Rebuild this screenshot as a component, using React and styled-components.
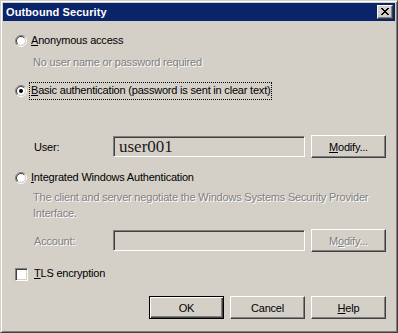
import React from "react";
import styled, { createGlobalStyle } from "styled-components";

const GlobalStyle = createGlobalStyle`
  html, body {
    margin: 0;
    padding: 0;
    background: #d4d0c8;
  }
  body {
    font-family: "Liberation Sans", Arial, sans-serif;
    font-size: 11px;
    letter-spacing: -0.2px;
    color: #000;
  }
`;

const RadioIcon = ({ checked }) => (
  <svg width="12" height="12" viewBox="0 0 12 12">
    <circle cx="6" cy="6" r="4" fill="#fff" />
    <path d="M2.1 9.9 A5.5 5.5 0 0 1 9.9 2.1" stroke="#808080" fill="none" />
    <path d="M9.9 2.1 A5.5 5.5 0 0 1 2.1 9.9" stroke="#fff" fill="none" />
    <path d="M2.8 9.2 A4.5 4.5 0 0 1 9.2 2.8" stroke="#404040" fill="none" />
    <path d="M9.2 2.8 A4.5 4.5 0 0 1 2.8 9.2" stroke="#d4d0c8" fill="none" />
    {checked && <circle cx="6" cy="6" r="2" fill="#000" />}
  </svg>
);

const Mn = ({ children }) => <u>{children}</u>;

export default function App() {
  return (
    <>
      <GlobalStyle />
      <Window>
        <TitleBar>
          <Title>Outbound Security</Title>
          <CloseButton>
            <svg width="8" height="7" viewBox="0 0 8 7">
              <path d="M0 0 L7 7 M1 0 L8 7 M7 0 L0 7 M8 0 L1 7" stroke="#000" strokeWidth="1" shapeRendering="crispEdges" />
            </svg>
          </CloseButton>
        </TitleBar>

        <Body>
          <Option $top={11}>
            <RadioIcon />
            <OptionLabel>
              <Mn>A</Mn>nonymous access
            </OptionLabel>
          </Option>
          <Description $top={4}>No user name or password required</Description>

          <Option $top={12}>
            <RadioIcon checked />
            <OptionLabel $focused>
              <Mn>B</Mn>asic authentication (password is sent in clear text)
            </OptionLabel>
          </Option>

          <FieldRow $top={35}>
            <FieldLabel>User:</FieldLabel>
            <TextBox>
              <UserValue>user001</UserValue>
            </TextBox>
            <Button>
              <Mn>M</Mn>odify...
            </Button>
          </FieldRow>

          <Option $top={11}>
            <RadioIcon />
            <OptionLabel>
              <Mn>I</Mn>ntegrated Windows Authentication
            </OptionLabel>
          </Option>
          <Description $top={2}>
            The client and server negotiate the Windows Systems Security Provider
            <br />
            Interface.
          </Description>

          <FieldRow $top={8}>
            <FieldLabel $disabled>Account:</FieldLabel>
            <TextBox />
            <Button $disabled>
              M<Mn>o</Mn>dify...
            </Button>
          </FieldRow>

          <CheckRow>
            <CheckBox />
            <OptionLabel>
              <Mn>T</Mn>LS encryption
            </OptionLabel>
          </CheckRow>

          <ButtonRow>
            <Button $default>OK</Button>
            <Button>Cancel</Button>
            <Button>
              <Mn>H</Mn>elp
            </Button>
          </ButtonRow>
        </Body>
      </Window>
    </>
  );
}

const Window = styled.div`
  width: 398px;
  height: 333px;
  box-sizing: border-box;
  padding: 2px;
  border: 1px solid;
  border-color: #d4d0c8 #404040 #404040 #d4d0c8;
  box-shadow: inset 1px 1px #fff, inset -1px -1px #808080;
  background: #d4d0c8;
  display: flex;
  flex-direction: column;
`;

const TitleBar = styled.div`
  height: 18px;
  background: #0a246a;
  display: flex;
  align-items: center;
  justify-content: space-between;
  padding: 0 2px 0 3px;
`;

const Title = styled.span`
  color: #fff;
  font-weight: bold;
  font-size: 11px;
  letter-spacing: 0.1px;
`;

const CloseButton = styled.div`
  width: 16px;
  height: 14px;
  box-sizing: border-box;
  background: #d4d0c8;
  border: 1px solid;
  border-color: #fff #404040 #404040 #fff;
  box-shadow: inset -1px -1px #808080;
  display: flex;
  align-items: center;
  justify-content: center;
  padding-bottom: 1px;
`;

const Body = styled.div`
  display: flex;
  flex-direction: column;
  padding: 0 9px 0 12px;
`;

const Option = styled.div`
  display: flex;
  align-items: center;
  gap: 3px;
  margin-top: ${(p) => p.$top}px;
  height: 18px;
`;

const OptionLabel = styled.span`
  padding: 1px 1px 2px 1px;
  outline: ${(p) => (p.$focused ? "1px dotted #000" : "none")};
  line-height: 13px;
`;

const Description = styled.div`
  margin-top: ${(p) => p.$top}px;
  padding-left: 18px;
  color: #808080;
  text-shadow: 1px 1px 0 #fff;
  line-height: 16px;
`;

const FieldRow = styled.div`
  display: flex;
  align-items: center;
  margin-top: ${(p) => p.$top}px;
  height: 23px;
`;

const FieldLabel = styled.span`
  width: 98px;
  padding-left: 19px;
  box-sizing: border-box;
  color: ${(p) => (p.$disabled ? "#808080" : "#000")};
  text-shadow: ${(p) => (p.$disabled ? "1px 1px 0 #fff" : "none")};
`;

const TextBox = styled.div`
  width: 192px;
  height: 21px;
  box-sizing: border-box;
  border: 1px solid;
  border-color: #808080 #fff #fff #808080;
  box-shadow: inset 1px 1px #404040, inset -1px -1px #d4d0c8;
  background: #d4d0c8;
  display: flex;
  align-items: center;
  padding-left: 5px;
`;

const UserValue = styled.span`
  font-family: "Liberation Serif", "Times New Roman", serif;
  font-size: 17px;
  letter-spacing: 0;
  color: #1a1a1a;
  line-height: 17px;
`;

const Button = styled.div`
  width: 75px;
  height: 23px;
  box-sizing: border-box;
  margin-left: ${(p) => (p.$default ? 0 : 6)}px;
  border: 1px solid;
  border-color: ${(p) => (p.$default ? "#000" : "#fff #404040 #404040 #fff")};
  box-shadow: ${(p) =>
    p.$default
      ? "inset 1px 1px #fff, inset -1px -1px #404040, inset -2px -2px #808080"
      : "inset -1px -1px #808080"};
  display: flex;
  align-items: center;
  justify-content: center;
  color: ${(p) => (p.$disabled ? "#808080" : "#000")};
  text-shadow: ${(p) => (p.$disabled ? "1px 1px 0 #fff" : "none")};
  background: #d4d0c8;
`;

const CheckRow = styled.div`
  display: flex;
  align-items: center;
  gap: 5px;
  margin-top: 14px;
  height: 16px;
`;

const CheckBox = styled.span`
  width: 13px;
  height: 13px;
  box-sizing: border-box;
  border: 1px solid;
  border-color: #808080 #fff #fff #808080;
  box-shadow: inset 1px 1px #404040, inset -1px -1px #d4d0c8;
  background: #fff;
`;

const ButtonRow = styled.div`
  display: flex;
  justify-content: flex-end;
  margin-top: 14px;
`;
